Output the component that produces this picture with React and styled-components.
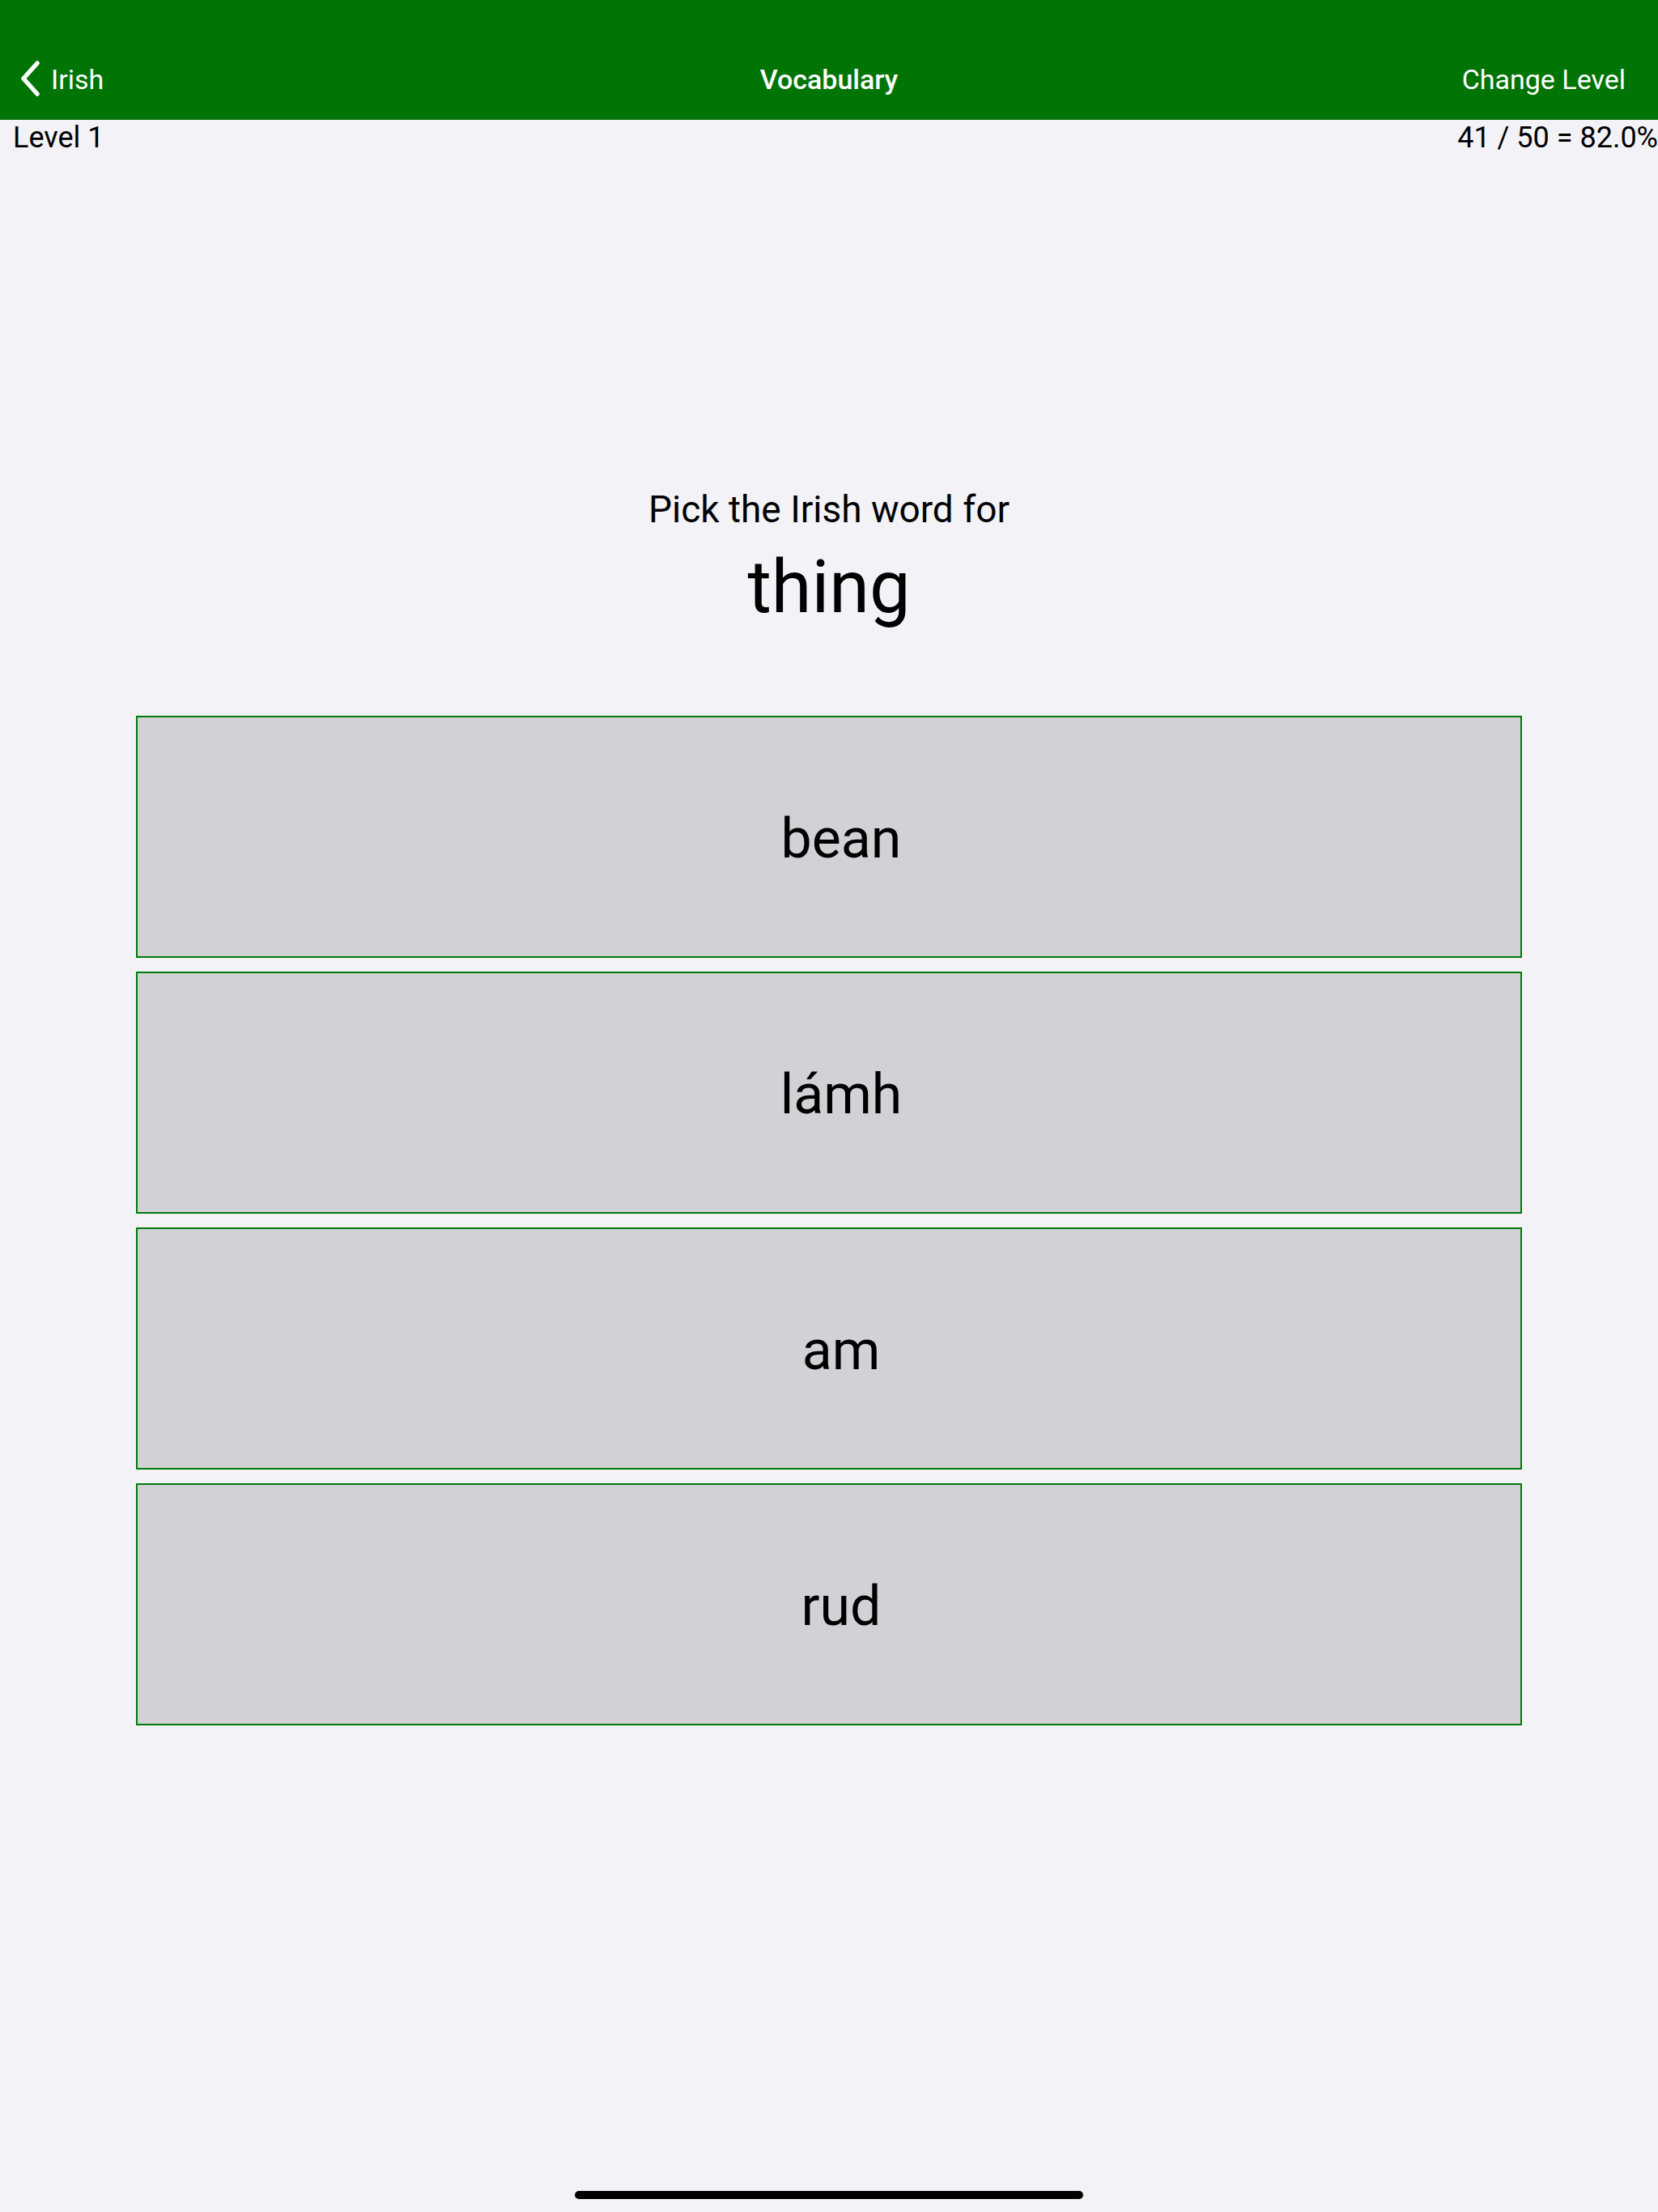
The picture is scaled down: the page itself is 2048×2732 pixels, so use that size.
import React from 'react'
import styled, { createGlobalStyle } from 'styled-components'

const GlobalStyle = createGlobalStyle`
    html, body {
        margin: 0;
        padding: 0;
        background: #f2f2f7;
    }
    body {
        font-family: Roboto, Inter, "Liberation Sans", sans-serif;
        -webkit-font-smoothing: antialiased;
    }
`

const choices = ['bean', 'lámh', 'am', 'rud']

function BackChevron() {
    return (
        <svg width="28" height="44" viewBox="0 0 28 44">
            <path d="M22 3 L5 22 L22 41" fill="none" stroke="#fff" strokeWidth="5.5" strokeLinecap="round" strokeLinejoin="round" />
        </svg>
    )
}

function App() {
    return (
        <Screen>
            <GlobalStyle />
            <NavBar>
                <BackButton>
                    <BackChevron />
                    Irish
                </BackButton>
                <NavTitle>Vocabulary</NavTitle>
                <NavAction>Change Level</NavAction>
            </NavBar>

            <InfoRow>
                <span>Level 1</span>
                <span>41 / 50 = 82.0%</span>
            </InfoRow>

            <Quiz>
                <Prompt>Pick the Irish word for</Prompt>
                <Word>thing</Word>
                <Choices>
                    {choices.map((c) => (
                        <Choice key={c}>{c}</Choice>
                    ))}
                </Choices>
            </Quiz>

            <HomeBar />
        </Screen>
    )
}

export default App

const Screen = styled.div`
    width: 2048px;
    height: 2732px;
    background: #f2f2f7;
    display: flex;
    flex-direction: column;
    overflow: hidden;
`

const NavBar = styled.div`
    height: 148px;
    box-sizing: border-box;
    padding-top: 48px;
    background: #007405;
    color: #fff;
    display: grid;
    grid-template-columns: 1fr auto 1fr;
    align-items: center;
    font-size: 34px;
`

const BackButton = styled.div`
    display: flex;
    align-items: center;
    gap: 11px;
    padding-left: 24px;
    svg {
        margin-top: -2px;
    }
`

const NavTitle = styled.div`
    font-weight: 500;
`

const NavAction = styled.div`
    justify-self: end;
    padding-right: 40px;
`

const InfoRow = styled.div`
    display: flex;
    justify-content: space-between;
    padding: 0 0 0 16px;
    font-size: 36px;
    line-height: 44px;
    color: #000;
`

const Quiz = styled.div`
    flex: 1;
    display: flex;
    flex-direction: column;
    align-items: center;
    padding-top: 408px;
`

const Prompt = styled.div`
    font-size: 46px;
    line-height: 58px;
    color: #000;
`

const Word = styled.div`
    margin-top: 14px;
    font-size: 90px;
    line-height: 108px;
    color: #000;
`

const Choices = styled.div`
    margin-top: 104px;
    width: 1712px;
    display: flex;
    flex-direction: column;
    gap: 17px;
`

const Choice = styled.div`
    height: 299px;
    box-sizing: border-box;
    border: 2px solid #007a08;
    padding: 4px 0 0 30px;
    background: #d1d1d6;
    display: flex;
    align-items: center;
    justify-content: center;
    font-size: 68px;
    color: #000;
`

const HomeBar = styled.div`
    align-self: center;
    width: 628px;
    height: 10px;
    border-radius: 5px;
    background: #000;
    margin-bottom: 16px;
`
